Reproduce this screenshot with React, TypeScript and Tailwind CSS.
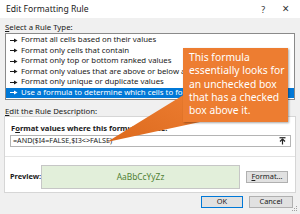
const rules = [
  "Format all cells based on their values",
  "Format only cells that contain",
  "Format only top or bottom ranked values",
  "Format only values that are above or below average",
  "Format only unique or duplicate values",
  "Use a formula to determine which cells to format",
];

function Arrow({ color }: { color: string }) {
  return (
    <svg width="8" height="5" viewBox="0 0 8 5" className="shrink-0">
      <path d="M0 2.5H4.5" stroke={color} strokeWidth="1" />
      <path d="M4 0.5L7.5 2.5L4 4.5Z" fill={color} />
    </svg>
  );
}

export default function App() {
  return (
    <div
      className="relative w-[300px] h-[214px] overflow-hidden bg-[#f0f0f0] text-[#1a1a1a]"
      style={{ fontFamily: '"Noto Sans", "Open Sans", sans-serif' }}
    >
      {/* title bar */}
      <div className="flex h-[18px] items-center justify-between bg-white pl-[6px] pr-[11px]">
        <span className="text-[8.6px] leading-none">Edit Formatting Rule</span>
        <div className="flex items-center gap-[17px] text-[9px] leading-none text-[#333]">
          <span>?</span>
          <span className="text-[12px]">×</span>
        </div>
      </div>

      <div className="px-[5px]">
        <p className="mt-[4px] text-[7.8px] leading-[11px]">
          <span className="underline">S</span>elect a Rule Type:
        </p>
        <div className="h-[67px] w-[290px] border border-[#8a8a8a] bg-white pt-[1px]">
          {rules.map((r, i) => {
            const sel = i === rules.length - 1;
            return (
              <div
                key={r}
                className={`flex h-[10.5px] items-center gap-[3px] pl-[4px] text-[7.8px] leading-none whitespace-nowrap ${
                  sel ? "bg-[#0078d7] text-white" : ""
                }`}
              >
                <Arrow color={sel ? "#ffffff" : "#1a1a1a"} />
                <span>{r}</span>
              </div>
            );
          })}
        </div>

        <p className="mt-[6px] text-[7.8px] leading-[10px]">
          <span className="underline">E</span>dit the Rule Description:
        </p>
      </div>

      <div className="mx-[4px] h-[77px] border border-[#d6d6d6] bg-white">
        <p className="mt-[6px] pl-[6px] text-[7.6px] font-bold leading-[11px]">
          F<span className="underline">o</span>rmat values where this formula is true:
        </p>
        <div className="ml-[5px] mt-[1px] flex h-[12px] w-[281px] items-center justify-between border border-[#b4b4b4] pl-[2px] pr-[4px]">
          <span className="text-[7.2px] leading-none">=AND($I4=FALSE,$I3&lt;&gt;FALSE)</span>
          <svg width="7" height="8" viewBox="0 0 7 8">
            <path d="M0.5 0.75H6.5" stroke="#222" strokeWidth="1.2" />
            <path d="M3.5 2V7.5" stroke="#222" strokeWidth="1.2" />
            <path d="M1 4.5L3.5 2L6 4.5" stroke="#222" strokeWidth="1.2" fill="none" />
          </svg>
        </div>
        <div className="mt-[9px] h-px bg-[#e3e3e3]" />
        <div className="mt-[8px] flex items-center">
          <span className="w-[36px] pl-[5px] text-[7.4px] font-bold leading-none">Preview:</span>
          <div className="flex h-[24px] w-[199px] items-center justify-center border border-[#c6c6c6] bg-[#e2efda] text-[8.4px] text-[#507f34]">
            AaBbCcYyZz
          </div>
          <button className="ml-[6px] h-[12px] w-[42px] border border-[#b0b0b0] bg-[#e1e1e1] text-[7.4px] leading-none">
            <span className="underline">F</span>ormat...
          </button>
        </div>
      </div>

      <div className="mt-[3px] flex justify-end gap-[6px] pr-[7px]">
        <button className="h-[12px] w-[42px] border border-[#0078d7] bg-[#e1e1e1] text-[7.4px] leading-none">
          OK
        </button>
        <button className="h-[12px] w-[44px] border border-[#b0b0b0] bg-[#e1e1e1] text-[7.4px] leading-none">
          Cancel
        </button>
      </div>

      <svg className="absolute bottom-[2px] right-[2px]" width="6" height="6" viewBox="0 0 6 6">
        <rect x="4" y="0" width="1" height="1" fill="#a0a0a0" />
        <rect x="2" y="2" width="1" height="1" fill="#a0a0a0" />
        <rect x="4" y="2" width="1" height="1" fill="#a0a0a0" />
        <rect x="0" y="4" width="1" height="1" fill="#a0a0a0" />
        <rect x="2" y="4" width="1" height="1" fill="#a0a0a0" />
        <rect x="4" y="4" width="1" height="1" fill="#a0a0a0" />
      </svg>

      {/* callout tail */}
      <svg className="absolute left-0 top-0" width="300" height="214" viewBox="0 0 300 214">
        <defs>
          <linearGradient id="tail" x1="1" y1="0" x2="0" y2="1">
            <stop offset="0" stopColor="#ed7d31" />
            <stop offset="1" stopColor="#dc6a1e" />
          </linearGradient>
        </defs>
        <polygon points="185,94 107,142 200,122" fill="url(#tail)" />
      </svg>

      {/* callout */}
      <div className="absolute left-[183px] top-[48px] h-[74px] w-[105px] bg-[#ed7d31] pl-[6px] pt-[3px] shadow-[1px_1px_2px_rgba(0,0,0,0.35)]">
        <p className="text-[10.3px] leading-[13.3px] text-white">
          This formula
          <br />
          essentially looks for
          <br />
          an unchecked box
          <br />
          that has a checked
          <br />
          box above it.
        </p>
      </div>
    </div>
  );
}
